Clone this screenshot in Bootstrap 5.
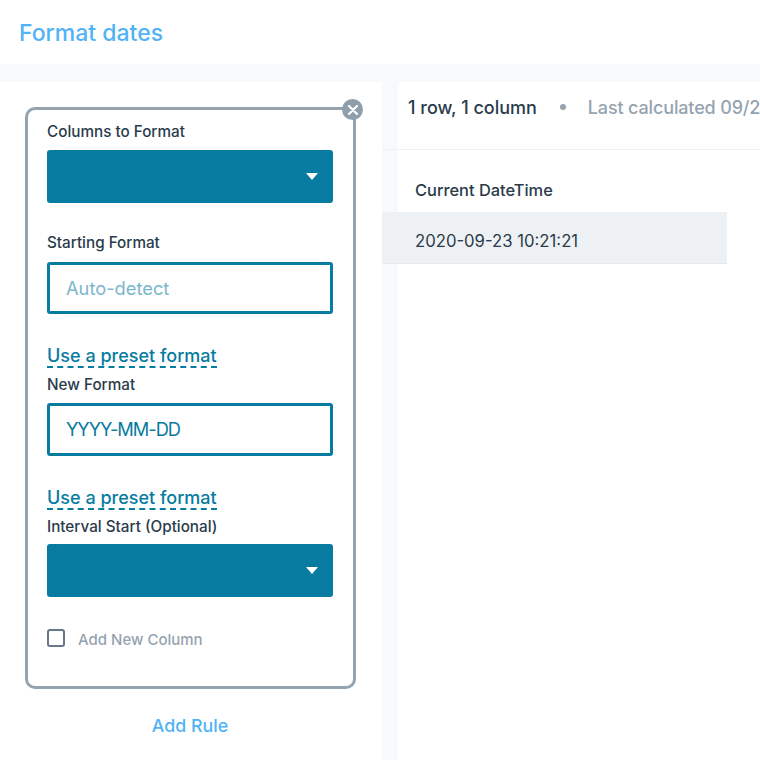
<!DOCTYPE html>
<html lang="en">
<head>
<meta charset="utf-8">
<title>Format dates</title>
<link href="https://cdn.jsdelivr.net/npm/bootstrap@5.3.0/dist/css/bootstrap.min.css" rel="stylesheet">
<style>
html,body{height:760px;overflow:hidden}
body{font-family:Inter,"Liberation Sans",sans-serif;background:#f7f9fa;color:#2a3b4c}
.page-head{height:64px;background:#fff;padding:17px 19px 0}
.page-title{font-size:23px;font-weight:500;line-height:32px;color:#4fb3f6;margin:0}
.work-area{height:696px;padding-top:18px}
.side-pane{width:382px;flex:none;background:#fff;padding:25px 26px 0 25px}
.rule-box{position:relative;width:331px;height:582px;border:3px solid #95a3af;border-radius:10px;padding:12px 20px 0 19px}
.close-dot{position:absolute;top:-11px;right:-10px;width:21px;height:21px;border-radius:50%;background:#8e9eab}
.field-label{display:block;font-size:15.25px;font-weight:500;line-height:20px;color:#2a3b4c;margin:0 0 9px}
.lbl-tight{margin-bottom:8px}
.drop-fill{position:relative;height:53px;background:#077ba0;border-radius:3px;margin-bottom:29px}
.drop-first{margin-bottom:30px}
.drop-fill::after{content:"";position:absolute;right:15px;top:23px;border:6.5px solid transparent;border-top:7px solid #fff;border-bottom:0}
.text-box{height:53px;border:3px solid #077ba0;border-radius:3px;padding:0 16px;font-size:18.3px;line-height:47px}
.text-box.is-empty{color:#7cb6cc;height:52px}
.text-box.is-set{color:#077ba0;letter-spacing:-1.05px}
.preset-link{display:inline-block;font-size:18px;font-weight:500;line-height:26px;color:#077ba0;text-decoration:none;border-bottom:2px dashed #077ba0;margin-top:29px;height:25px}
.preset-link + .field-label{margin-top:7px;margin-bottom:8px}
.preset-link + .field-label.lbl-tight{margin-bottom:7px}
.check-row{display:flex;align-items:center;margin-top:1px}
.tick-box{width:18px;height:18px;border:2px solid #67788a;border-radius:3px;margin-right:13px;flex:none}
.check-text{font-size:15px;font-weight:500;color:#95a3af;line-height:20px;margin-top:4px}
.add-rule{display:block;text-align:center;font-size:17.8px;font-weight:500;color:#4fb3f6;text-decoration:none;margin-top:25px;line-height:24px;width:330px}
.data-pane{flex:1;min-width:0;background:#fff;margin-left:16px}
.stat-row{height:68px;margin-left:-16px;padding:14px 0 0 26px;border-bottom:1px solid #eef1f3;font-size:18px;line-height:24px;white-space:nowrap;font-weight:500}
.stat-sep{flex:none;width:6px;height:6px;border-radius:50%;background:#95a3af;margin:0 22px 0 23px}
.stat-muted{color:#95a3af;letter-spacing:-.15px}
.col-head{margin-left:-16px;padding:28px 0 0 33px;font-size:16.4px;font-weight:500;line-height:24px;height:62px;color:#2a3b4c}
.data-row{margin-left:-16px;width:345px;height:52px;background:#eef1f3;border-bottom:1px solid #e4e8eb;padding:0 0 0 33px;font-size:16.7px;line-height:59px;color:#2a3b4c}
</style>
</head>
<body>
<header class="page-head"><h1 class="page-title">Format dates</h1></header>
<main class="work-area d-flex">
  <aside class="side-pane">
    <div class="rule-box">
      <span class="close-dot d-flex align-items-center justify-content-center">
        <svg width="10" height="10" viewBox="0 0 10 10"><path d="M1 1L9 9M9 1L1 9" stroke="#fff" stroke-width="2.3" stroke-linecap="round"/></svg>
      </span>
      <label class="field-label lbl-tight">Columns to Format</label>
      <div class="drop-fill drop-first"></div>
      <label class="field-label">Starting Format</label>
      <div class="text-box is-empty">Auto-detect</div>
      <a class="preset-link" href="#">Use a preset format</a>
      <label class="field-label">New Format</label>
      <div class="text-box is-set">YYYY-MM-DD</div>
      <a class="preset-link" href="#">Use a preset format</a>
      <label class="field-label lbl-tight">Interval Start (Optional)</label>
      <div class="drop-fill"></div>
      <div class="check-row"><span class="tick-box"></span><span class="check-text">Add New Column</span></div>
    </div>
    <a class="add-rule" href="#">Add Rule</a>
  </aside>
  <section class="data-pane">
    <div class="stat-row d-flex align-items-start"><span>1 row, 1 column</span><span class="stat-sep mt-2"></span><span class="stat-muted">Last calculated 09/2</span></div>
    <div class="col-head">Current DateTime</div>
    <div class="data-row">2020-09-23 10:21:21</div>
  </section>
</main>
</body>
</html>
